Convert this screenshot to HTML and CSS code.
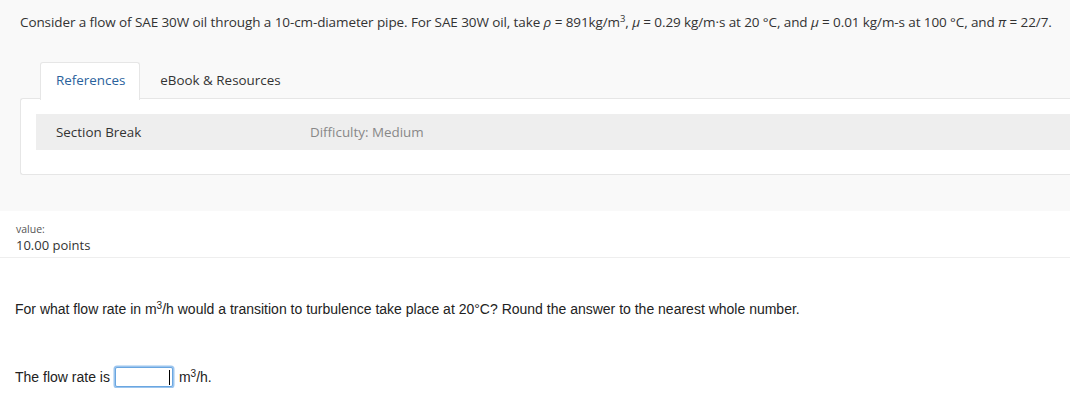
FILE: index.html
```html
<!DOCTYPE html>
<html>
<head>
<meta charset="utf-8">
<link rel="stylesheet" href="styles.css">
</head>
<body>
<div class="top">
  <p class="stem">Consider a flow of SAE 30W oil through a 10-cm-diameter pipe. For SAE 30W oil, take <i>ρ</i> = 891kg/m<sup>3</sup>, <i>μ</i> = 0.29 kg/m·s at 20 °C, and <i>μ</i> = 0.01 kg/m-s at 100 °C, and <i>π</i> = 22/7.</p>
  <div class="tabs">
    <div class="tab active">References</div>
    <div class="tab">eBook &amp; Resources</div>
  </div>
  <div class="panel">
    <div class="bar">
      <span class="bar-title">Section Break</span>
      <span class="bar-diff">Difficulty: Medium</span>
    </div>
  </div>
</div>
<div class="value">
  <div class="value-label">value:</div>
  <div class="value-points">10.00 points</div>
</div>
<div class="question">
  <p class="q">For what flow rate in m<sup>3</sup>/h would a transition to turbulence take place at 20°C? Round the answer to the nearest whole number.</p>
  <p class="answer">The flow rate is<span class="input"><span class="caret"></span></span>m<sup>3</sup>/h.</p>
</div>
</body>
</html>
```

FILE: styles.css
```css
html, body {
  margin: 0;
  padding: 0;
  background: #ffffff;
  overflow: hidden;
}
body {
  font-family: "Open Sans", "Liberation Sans", sans-serif;
  color: #333333;
}
.top {
  background: #f9f9f9;
  padding: 14px 0 35px 20px;
  height: 162px;
}
.stem {
  margin: 0;
  font-size: 13.5px;
  line-height: 16px;
  color: #333;
  white-space: nowrap;
  letter-spacing: -0.1px;
}
.stem sup {
  font-size: 9.5px;
  line-height: 0;
  vertical-align: 5px;
}
.tabs {
  display: flex;
  margin: 32px 0 0 20px;
  height: 36px;
}
.tab {
  display: flex;
  align-items: center;
  font-size: 13.4px;
  color: #333;
  padding: 0 20px;
}
.tab.active {
  position: relative;
  z-index: 1;
  background: #fff;
  border: 1px solid #e6e6e6;
  border-bottom: none;
  border-radius: 3px 3px 0 0;
  color: #2a629c;
  padding: 0 14px 3px 15px;
  height: 34px;
}
.panel {
  background: #fff;
  border: 1px solid #e6e6e6;
  border-right: none;
  border-radius: 3px 0 0 3px;
  padding: 15px 0 24px 15px;
}
.bar {
  display: flex;
  align-items: center;
  height: 36px;
  background: #eeeeee;
  padding-left: 20px;
  font-size: 13.4px;
}
.bar-title {
  width: 254px;
  color: #333;
}
.bar-diff {
  color: #888;
}
.value {
  padding: 11px 16px 0;
  height: 35px;
  border-bottom: 1px solid #eeeeee;
}
.value-label {
  font-size: 10.5px;
  color: #555;
  line-height: 14px;
}
.value-points {
  font-size: 13px;
  line-height: 18px;
  color: #333;
}
.question {
  padding: 0 15px;
  font-family: "Liberation Sans", Arial, sans-serif;
  font-size: 14px;
  color: #222;
}
.q {
  margin: 43px 0 0;
  line-height: 16px;
}
.q sup, .answer sup {
  font-size: 10px;
  line-height: 0;
  vertical-align: 5px;
}
.answer {
  margin: 49px 0 0;
  line-height: 22px;
}
.input {
  display: inline-flex;
  justify-content: flex-end;
  align-items: center;
  vertical-align: middle;
  box-sizing: border-box;
  width: 58px;
  height: 20px;
  border: 1px solid #6aa6e0;
  box-shadow: 0 0 0 1.5px #9cc5ee;
  border-radius: 2px;
  background: #fff;
  margin: -2px 6px 0 5px;
}
.caret {
  width: 1px;
  height: 15px;
  background: #000;
  margin-right: 2px;
}
```
